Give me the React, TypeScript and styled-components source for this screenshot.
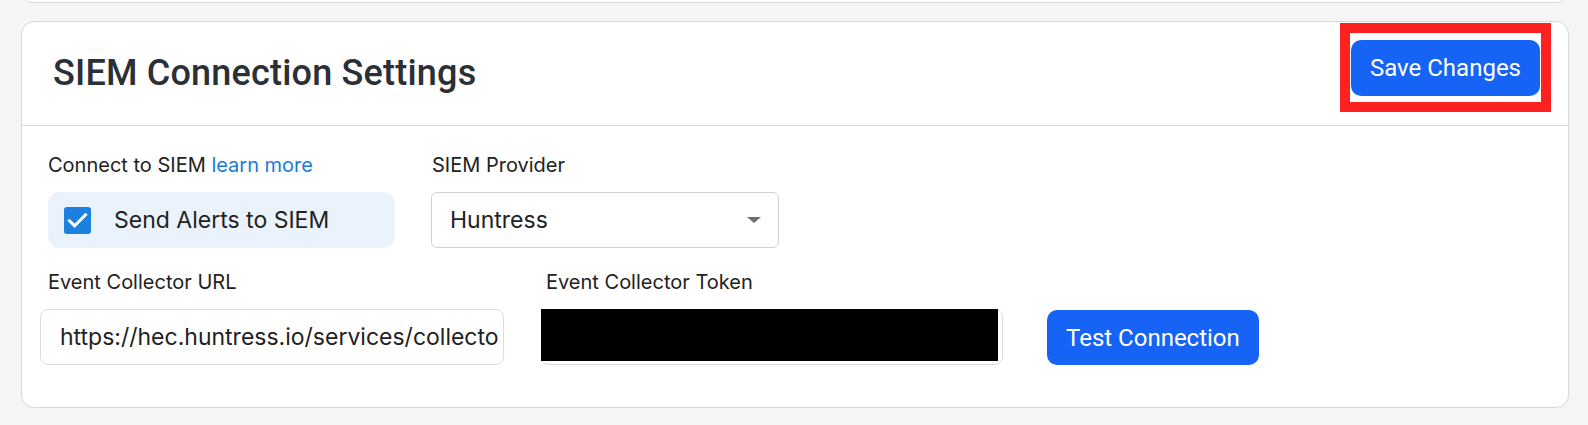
import React from "react";
import styled, { createGlobalStyle } from "styled-components";

const GlobalStyle = createGlobalStyle`
  html, body {
    margin: 0;
    padding: 0;
    background: #f5f6f4;
    font-family: Inter, "Noto Sans", Arial, sans-serif;
    color: #222;
  }
  * { box-sizing: border-box; }
`;

const Page = styled.div`
  display: flex;
  flex-direction: column;
  gap: 18px;
  padding: 0 19px 19px 21px;
  overflow: hidden;
`;

const PrevCard = styled.div`
  height: 40px;
  margin-top: -37px;
  background: #fff;
  border: 1px solid #d8d8d8;
  border-radius: 12px;
`;

const Card = styled.section`
  background: #fff;
  border: 1px solid #d8d8d8;
  border-radius: 13px;
`;

const CardHeader = styled.header`
  display: flex;
  justify-content: space-between;
  align-items: flex-start;
  height: 104px;
  padding: 0 28px 0 31px;
  border-bottom: 1px solid #d8d8d8;
`;

const Title = styled.h2`
  align-self: center;
  margin: 0 0 1px;
  font-family: Roboto, "Liberation Sans", Arial, sans-serif;
  font-weight: 500;
  font-size: 36px;
  letter-spacing: 0.2px;
  line-height: normal;
  color: #2b2f36;
`;

const Highlight = styled.div`
  position: relative;
  margin-top: 18px;
  &::after {
    content: "";
    position: absolute;
    top: -17px;
    bottom: -16px;
    left: -11px;
    right: -11px;
    border: 10px solid #ff2020;
    pointer-events: none;
  }
`;

const PrimaryButton = styled.button<{ $height?: number }>`
  display: inline-flex;
  align-items: center;
  height: ${(p) => p.$height ?? 56}px;
  padding: 0 19px;
  border: none;
  border-radius: 10px;
  background: #1663f5;
  color: #fff;
  font-family: Roboto, "Liberation Sans", Arial, sans-serif;
  font-size: 24px;
  font-weight: 400;
  white-space: nowrap;
  cursor: pointer;
`;

const CardBody = styled.div`
  display: flex;
  flex-direction: column;
  gap: 22px;
  padding: 27px 26px 42px 26px;
`;

const FieldRow = styled.div<{ $gap: number; $shift?: number }>`
  display: flex;
  align-items: flex-start;
  gap: ${(p) => p.$gap}px;
  margin-left: ${(p) => p.$shift ?? 0}px;
`;

const Field = styled.div<{ $width: number }>`
  display: flex;
  flex-direction: column;
  gap: 15px;
  width: ${(p) => p.$width}px;
`;

const Label = styled.label<{ $indent?: number }>`
  display: block;
  padding-left: ${(p) => p.$indent ?? 0}px;
  font-size: 20px;
  line-height: 24px;
  color: #222;
  white-space: nowrap;
`;

const LearnMore = styled.a`
  color: #187dd7;
  text-decoration: none;
`;

const CheckPanel = styled.label`
  display: flex;
  align-items: center;
  gap: 23px;
  height: 56px;
  padding-left: 16px;
  border-radius: 12px;
  background: #eaf3fc;
  font-size: 23px;
  color: #222;
`;

const CheckBox = styled.span`
  display: inline-flex;
  align-items: center;
  justify-content: center;
  width: 27px;
  height: 27px;
  border-radius: 3px;
  background: #1b80de;
`;

const SelectBox = styled.div`
  display: flex;
  align-items: center;
  justify-content: space-between;
  height: 56px;
  padding: 0 17px 0 18px;
  border: 1px solid #cfd3d8;
  border-radius: 6px;
  background: #fff;
  font-size: 23px;
  color: #222;
`;

const Caret = styled.span`
  width: 0;
  height: 0;
  border-left: 7.5px solid transparent;
  border-right: 7.5px solid transparent;
  border-top: 6px solid #707070;
`;

const InputWrap = styled.div`
  position: relative;
`;

const TextInput = styled.input`
  display: block;
  width: 100%;
  height: 56px;
  padding: 0 3px 0 19px;
  border: 1px solid #d9dce1;
  border-radius: 8px;
  background: #fff;
  font-family: Inter, "Noto Sans", Arial, sans-serif;
  font-size: 23px;
  color: #222;
  outline: none;
`;

const Redaction = styled.span`
  position: absolute;
  top: 0;
  left: 0;
  right: 5px;
  bottom: 4px;
  background: #000;
`;

const ButtonSlot = styled.div`
  align-self: flex-end;
  margin-left: 7px;
`;

export default function App() {
  return (
    <>
      <GlobalStyle />
      <Page>
        <PrevCard />
        <Card>
          <CardHeader>
            <Title>SIEM Connection Settings</Title>
            <Highlight>
              <PrimaryButton>Save Changes</PrimaryButton>
            </Highlight>
          </CardHeader>
          <CardBody>
            <FieldRow $gap={36}>
              <Field $width={347}>
                <Label>
                  Connect to SIEM <LearnMore href="#">learn more</LearnMore>
                </Label>
                <CheckPanel>
                  <CheckBox>
                    <svg width="27" height="27" viewBox="0 0 27 27" fill="none">
                      <path
                        d="M5.5 13.8 L10.6 18.8 L21.5 7.8"
                        stroke="#fff"
                        strokeWidth="3"
                        strokeLinecap="square"
                      />
                    </svg>
                  </CheckBox>
                  Send Alerts to SIEM
                </CheckPanel>
              </Field>
              <Field $width={348}>
                <Label $indent={1}>SIEM Provider</Label>
                <SelectBox>
                  Huntress
                  <Caret />
                </SelectBox>
              </Field>
            </FieldRow>
            <FieldRow $gap={37} $shift={-8}>
              <Field $width={464}>
                <Label $indent={8}>Event Collector URL</Label>
                <TextInput
                  readOnly
                  value="https://hec.huntress.io/services/collector/event"
                />
              </Field>
              <Field $width={462}>
                <Label $indent={5}>Event Collector Token</Label>
                <InputWrap>
                  <TextInput readOnly value="" />
                  <Redaction />
                </InputWrap>
              </Field>
              <ButtonSlot>
                <PrimaryButton $height={55}>Test Connection</PrimaryButton>
              </ButtonSlot>
            </FieldRow>
          </CardBody>
        </Card>
      </Page>
    </>
  );
}
